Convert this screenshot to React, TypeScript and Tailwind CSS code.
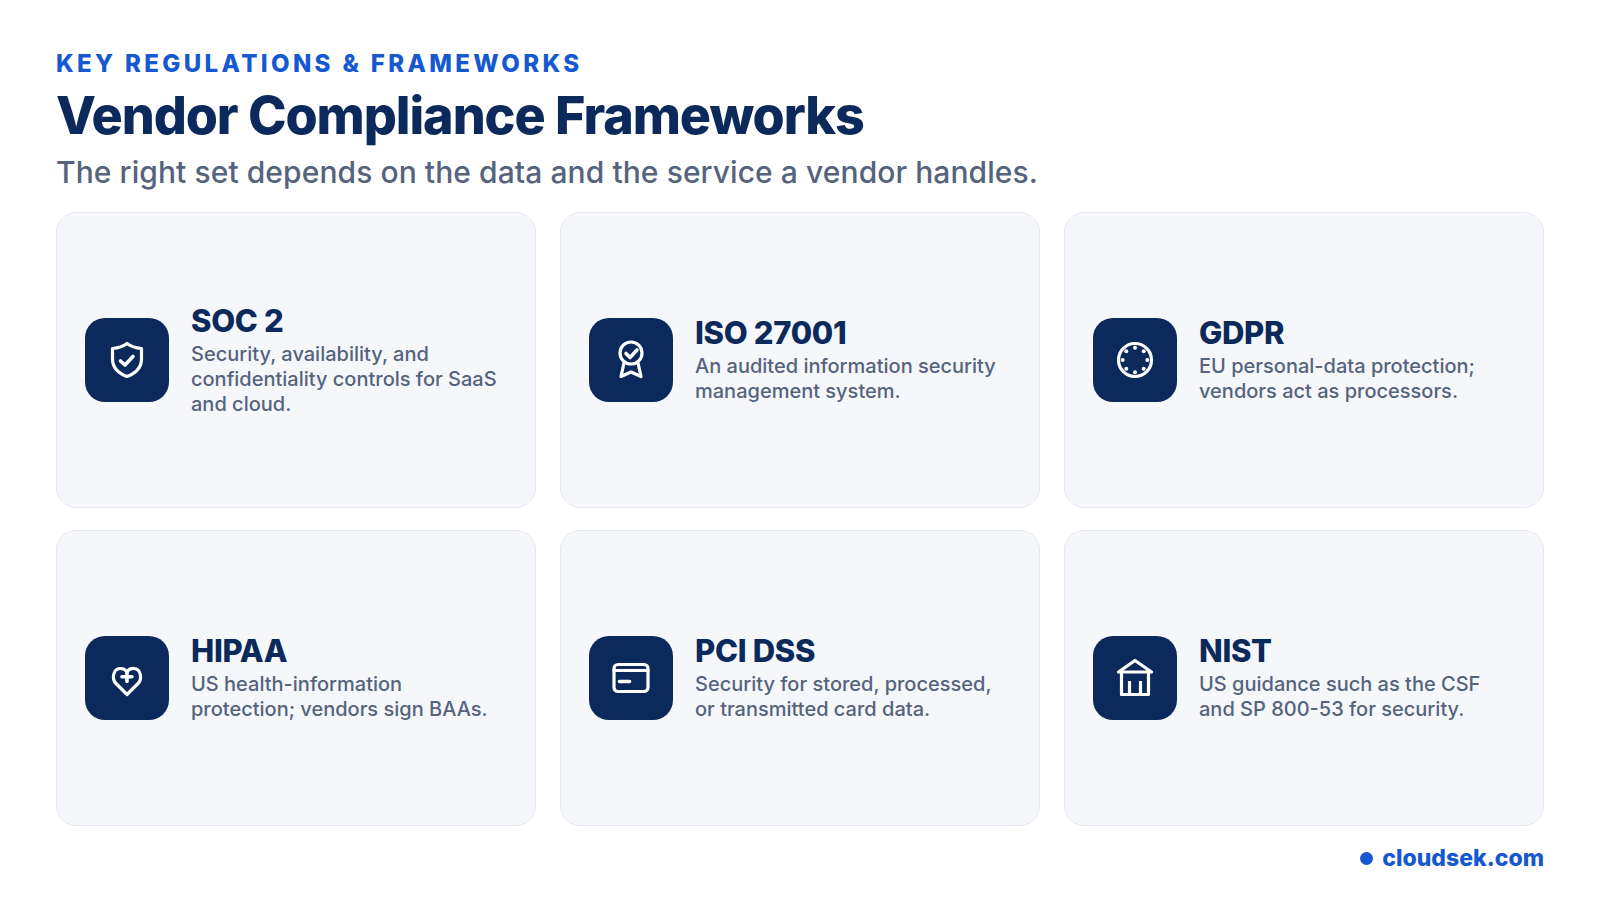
const ShieldIcon = () => (
  <svg viewBox="0 0 48 48" className="w-12 h-12" fill="none" stroke="white" strokeWidth="3.2" strokeLinecap="round" strokeLinejoin="round">
    <path d="M24 7.5 C28 10.5 33 12 38.5 12.5 V23 C38.5 31.5 32 37.5 24 40.5 C16 37.5 9.5 31.5 9.5 23 V12.5 C15 12 20 10.5 24 7.5 Z" />
    <path d="M17.5 25 L22 29 L30 20.5" strokeWidth="3.6" />
  </svg>
);

const AwardIcon = () => (
  <svg viewBox="0 0 48 48" className="w-12 h-12" fill="none" stroke="white" strokeWidth="3.2" strokeLinecap="round" strokeLinejoin="round">
    <circle cx="24" cy="17" r="11" />
    <path d="M19 17.5 L23 21.5 L30 14" strokeWidth="3.6" />
    <path d="M17 27 L14 40.5 L24 36 L34 40.5 L31 27" />
  </svg>
);

const dots = [
  [24, 11.7],
  [32.7, 15.3],
  [36.3, 24],
  [32.7, 32.7],
  [24, 36.3],
  [15.3, 32.7],
  [11.7, 24],
  [15.3, 15.3],
];

const EuIcon = () => (
  <svg viewBox="0 0 48 48" className="w-12 h-12" fill="none" stroke="white" strokeWidth="3.2">
    <circle cx="24" cy="24" r="16.5" />
    {dots.map(([x, y]) => (
      <circle key={`${x}-${y}`} cx={x} cy={y} r="2" fill="white" stroke="none" />
    ))}
  </svg>
);

const HeartIcon = () => (
  <svg viewBox="0 0 48 48" className="w-12 h-12" fill="none" stroke="white" strokeWidth="3.2" strokeLinecap="round" strokeLinejoin="round">
    <path d="M24 40.5 L13 29.5 C8.5 25 10 15 17 14.5 C20 14.3 22.5 15.5 24 18 C25.5 15.5 28 14.3 31 14.5 C38 15 39.5 25 35 29.5 Z" />
    <path d="M24 18 V27.5 M19 22.7 H29" strokeWidth="3.6" />
  </svg>
);

const CardIcon = () => (
  <svg viewBox="0 0 48 48" className="w-12 h-12" fill="none" stroke="white" strokeWidth="3.2" strokeLinecap="round" strokeLinejoin="round">
    <rect x="7" y="10.5" width="34" height="27" rx="4" />
    <path d="M7 16.5 H41" />
    <path d="M12.5 27.5 H22.5" strokeWidth="3.6" />
  </svg>
);

const BankIcon = () => (
  <svg viewBox="0 0 48 48" className="w-12 h-12" fill="none" stroke="white" strokeWidth="3.2" strokeLinecap="round" strokeLinejoin="round">
    <path d="M24 6.5 L7.5 18 H40.5 Z" />
    <path d="M10.5 18 V40.5 H37.5 V18" strokeLinecap="butt" />
    <path d="M18.5 40.5 V27 M29.5 40.5 V27" strokeLinecap="butt" />
  </svg>
);

const frameworks = [
  { name: "SOC 2", desc: "Security, availability, and confidentiality controls for SaaS and cloud.", icon: <ShieldIcon /> },
  { name: "ISO 27001", desc: "An audited information security management system.", icon: <AwardIcon /> },
  { name: "GDPR", desc: "EU personal-data protection; vendors act as processors.", icon: <EuIcon /> },
  { name: "HIPAA", desc: "US health-information protection; vendors sign BAAs.", icon: <HeartIcon /> },
  { name: "PCI DSS", desc: "Security for stored, processed, or transmitted card data.", icon: <CardIcon /> },
  { name: "NIST", desc: "US guidance such as the CSF and SP 800-53 for security.", icon: <BankIcon /> },
];

export default function App() {
  return (
    <div className="w-[1600px] h-[900px] bg-white px-14 pt-[48px] flex flex-col font-['Inter',sans-serif] overflow-hidden">
      <p className="text-[24px] leading-[32px] font-extrabold tracking-[0.14em] text-[#1558d0]">
        KEY REGULATIONS &amp; FRAMEWORKS
      </p>
      <h1 className="text-[52px] leading-[60px] font-extrabold tracking-[-1.08px] text-[#0b2a5b] mt-[6px]">
        Vendor Compliance Frameworks
      </h1>
      <p className="text-[30px] leading-[38px] font-medium tracking-[0.08px] text-[#55637d] mt-[7px]">
        The right set depends on the data and the service a vendor handles.
      </p>
      <div className="grid grid-cols-3 gap-x-6 gap-y-[22px] mt-[21px]">
        {frameworks.map((f) => (
          <div
            key={f.name}
            className="h-[296px] bg-[#f5f7fb] border border-[#e6e9f2] rounded-[20px] px-7 flex items-center gap-[22px]"
          >
            <div className="w-[84px] h-[84px] shrink-0 rounded-[20px] bg-[#0b2a5b] flex items-center justify-center">
              {f.icon}
            </div>
            <div className="min-w-0 pt-[2px] pb-[1px]">
              <h3 className="text-[31px] leading-[32px] font-extrabold tracking-[-0.01em] text-[#0b2a5b] mb-[5px]">
                {f.name}
              </h3>
              <p className="text-[20px] leading-[25px] font-medium text-[#55637d]">{f.desc}</p>
            </div>
          </div>
        ))}
      </div>
      <div className="flex items-center justify-end gap-[9px] mt-[16px]">
        <span className="w-[13px] h-[13px] rounded-full bg-[#1558d0]" />
        <span className="text-[23px] leading-[32px] font-extrabold text-[#1558d0]">cloudsek.com</span>
      </div>
    </div>
  );
}
